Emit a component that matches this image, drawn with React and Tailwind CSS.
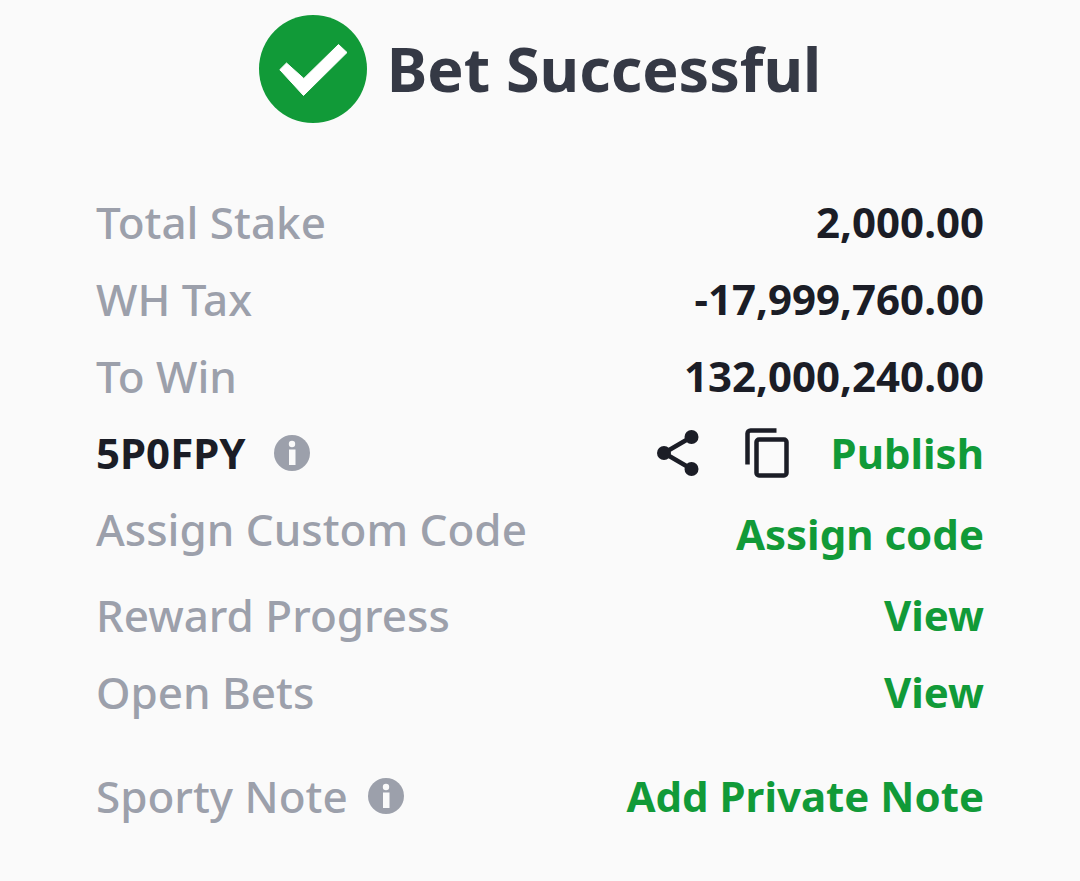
import React from "react";

const amounts = [
  { id: "stake", label: "Total Stake", value: "2,000.00" },
  { id: "tax", label: "WH Tax", value: "-17,999,760.00" },
  { id: "win", label: "To Win", value: "132,000,240.00" },
];

function SuccessIcon() {
  return (
    <svg viewBox="0 0 108 108" className="size-27 shrink-0" aria-hidden="true">
      <circle cx="54" cy="54" r="54" fill="#119a38" />
      <path
        d="M27.500 48 20.800 54.700 44.500 80.500 88 37.500 79.500 29.500 44.800 63.500z"
        fill="#fff"
        stroke="#fff"
        strokeLinejoin="round"
      />
    </svg>
  );
}

function InfoIcon() {
  return (
    <svg viewBox="0 0 36 36" className="size-9" aria-hidden="true">
      <circle cx="18" cy="18" r="18" fill="#9ca0ab" />
      <circle cx="18" cy="9" r="3.2" fill="#fafafa" />
      <path d="M15 14.5h6.5v15.500H15z" fill="#fafafa" />
    </svg>
  );
}

function ShareIcon() {
  return (
    <svg viewBox="0 0 42 46" className="h-[46px] w-[42px]" aria-hidden="true">
      <path d="M34.5 7 7 23l27.5 16" fill="none" stroke="#1b1d26" strokeWidth="4.5" />
      <g fill="#1b1d26">
        <circle cx="34.5" cy="7" r="7" />
        <circle cx="7" cy="23" r="7" />
        <circle cx="34.5" cy="39" r="7" />
      </g>
    </svg>
  );
}

function CopyIcon() {
  return (
    <svg viewBox="0 0 44 50" className="h-[50px] w-11" aria-hidden="true">
      <g fill="none" stroke="#1b1d26" strokeWidth="4.5">
        <path d="M2.500 36.500V5.500a3 3 0 0 1 3-3h26" />
        <rect x="11.5" y="11.5" width="30" height="36" rx="2.500" />
      </g>
    </svg>
  );
}

function Label({ children }) {
  return <span className="text-[44px] text-[#9ca0ab]">{children}</span>;
}

function Row({ label, children }) {
  return (
    <div className="flex h-[77px] items-center justify-between">
      <Label>{label}</Label>
      {children}
    </div>
  );
}

function Action({ children }) {
  return (
    <button type="button" className="cursor-pointer font-bold text-[#119a38]">
      {children}
    </button>
  );
}

function App() {
  return (
    <main className="min-h-screen bg-[#fafafa] px-24 pt-[15px] pb-11 font-['Noto_Sans',sans-serif] text-[42px] leading-[56px] font-medium whitespace-nowrap">
      <header className="flex items-center justify-center gap-5">
        <SuccessIcon />
        <h1 className="text-[61px] leading-[72px] font-bold text-[#353945]">
          Bet Successful
        </h1>
      </header>

      <section className="pt-[60px]">
        {amounts.map((item) => (
          <Row key={item.id} label={item.label}>
            <span className="font-bold text-[#1b1d26]">{item.value}</span>
          </Row>
        ))}

        <div className="flex h-[77px] items-center justify-between">
          <div className="flex items-center gap-7">
            <span className="font-bold text-[#1b1d26]">5P0FPY</span>
            <button type="button" aria-label="Booking code info" className="cursor-pointer">
              <InfoIcon />
            </button>
          </div>
          <div className="flex items-center">
            <button type="button" aria-label="Share" className="mr-[46px] cursor-pointer">
              <ShareIcon />
            </button>
            <button type="button" aria-label="Copy code" className="mr-[42px] cursor-pointer">
              <CopyIcon />
            </button>
            <Action>Publish</Action>
          </div>
        </div>

        <div className="flex h-[85px] items-center justify-between">
          <div className="pb-2">
            <Label>Assign Custom Code</Label>
          </div>
          <Action>Assign code</Action>
        </div>
        <Row label="Reward Progress">
          <Action>View</Action>
        </Row>
        <Row label="Open Bets">
          <Action>View</Action>
        </Row>
      </section>

      <section className="mt-[27px] flex h-[77px] items-center justify-between">
        <div className="flex items-center gap-5">
          <Label>Sporty Note</Label>
          <button type="button" aria-label="Sporty note info" className="cursor-pointer">
            <InfoIcon />
          </button>
        </div>
        <Action>Add Private Note</Action>
      </section>
    </main>
  );
}

export default App;
